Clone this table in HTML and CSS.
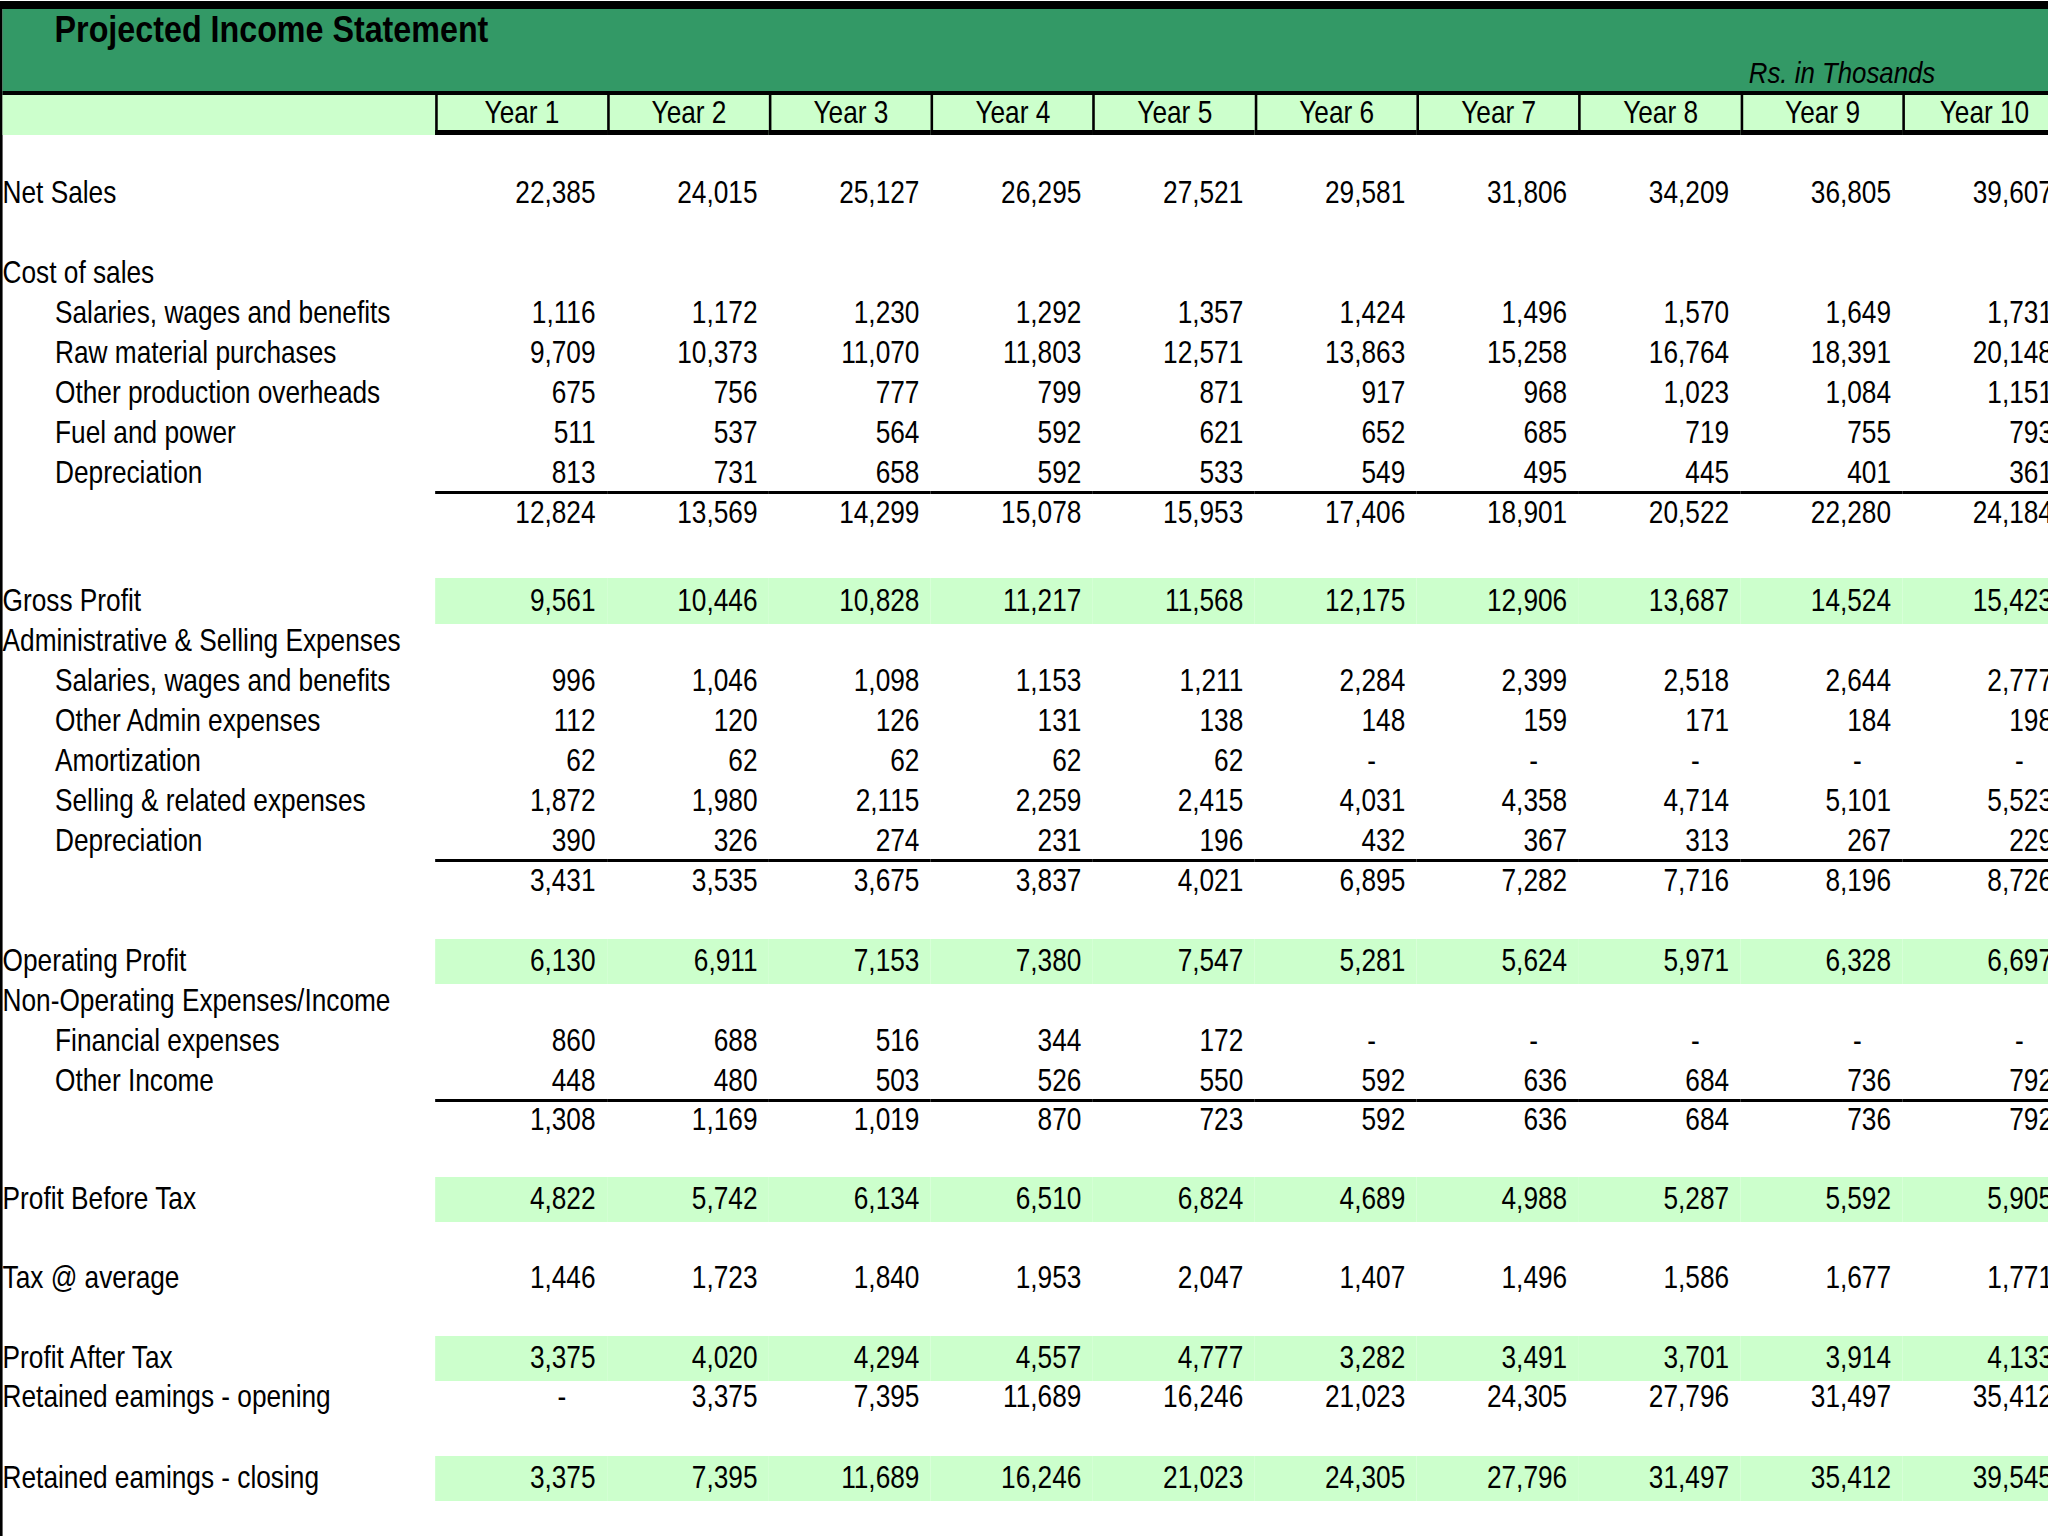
FILE: index.html
```html
<!DOCTYPE html>
<html>
<head>
<meta charset="utf-8">
<title>Projected Income Statement</title>
<link rel="stylesheet" href="styles.css">
</head>
<body>
<div class="sheet">
  <div class="titlebar">
    <div class="title">Projected Income Statement</div>
    <div class="units">Rs. in Thosands</div>
  </div>

  <div class="row head">
    <div class="c lbl"></div>
    <div class="c yr">Year 1</div><div class="c yr">Year 2</div><div class="c yr">Year 3</div><div class="c yr">Year 4</div><div class="c yr">Year 5</div>
    <div class="c yr">Year 6</div><div class="c yr">Year 7</div><div class="c yr">Year 8</div><div class="c yr">Year 9</div><div class="c yr">Year 10</div>
  </div>

  <div class="row h41"></div>

  <div class="row">
    <div class="c lbl">Net Sales</div>
    <div class="c v">22,385</div><div class="c v">24,015</div><div class="c v">25,127</div><div class="c v">26,295</div><div class="c v">27,521</div>
    <div class="c v">29,581</div><div class="c v">31,806</div><div class="c v">34,209</div><div class="c v">36,805</div><div class="c v">39,607</div>
  </div>

  <div class="row"></div>

  <div class="row">
    <div class="c lbl">Cost of sales</div>
  </div>
  <div class="row">
    <div class="c lbl ind">Salaries, wages and benefits</div>
    <div class="c v">1,116</div><div class="c v">1,172</div><div class="c v">1,230</div><div class="c v">1,292</div><div class="c v">1,357</div>
    <div class="c v">1,424</div><div class="c v">1,496</div><div class="c v">1,570</div><div class="c v">1,649</div><div class="c v">1,731</div>
  </div>
  <div class="row">
    <div class="c lbl ind">Raw material purchases</div>
    <div class="c v">9,709</div><div class="c v">10,373</div><div class="c v">11,070</div><div class="c v">11,803</div><div class="c v">12,571</div>
    <div class="c v">13,863</div><div class="c v">15,258</div><div class="c v">16,764</div><div class="c v">18,391</div><div class="c v">20,148</div>
  </div>
  <div class="row">
    <div class="c lbl ind">Other production overheads</div>
    <div class="c v">675</div><div class="c v">756</div><div class="c v">777</div><div class="c v">799</div><div class="c v">871</div>
    <div class="c v">917</div><div class="c v">968</div><div class="c v">1,023</div><div class="c v">1,084</div><div class="c v">1,151</div>
  </div>
  <div class="row">
    <div class="c lbl ind">Fuel and power</div>
    <div class="c v">511</div><div class="c v">537</div><div class="c v">564</div><div class="c v">592</div><div class="c v">621</div>
    <div class="c v">652</div><div class="c v">685</div><div class="c v">719</div><div class="c v">755</div><div class="c v">793</div>
  </div>
  <div class="row pre h35">
    <div class="c lbl ind">Depreciation</div>
    <div class="c v">813</div><div class="c v">731</div><div class="c v">658</div><div class="c v">592</div><div class="c v">533</div>
    <div class="c v">549</div><div class="c v">495</div><div class="c v">445</div><div class="c v">401</div><div class="c v">361</div>
  </div>
  <div class="row tot h45">
    <div class="c lbl"></div>
    <div class="c v">12,824</div><div class="c v">13,569</div><div class="c v">14,299</div><div class="c v">15,078</div><div class="c v">15,953</div>
    <div class="c v">17,406</div><div class="c v">18,901</div><div class="c v">20,522</div><div class="c v">22,280</div><div class="c v">24,184</div>
  </div>

  <div class="row h42"></div>

  <div class="row hl h46">
    <div class="c lbl">Gross Profit</div>
    <div class="c v">9,561</div><div class="c v">10,446</div><div class="c v">10,828</div><div class="c v">11,217</div><div class="c v">11,568</div>
    <div class="c v">12,175</div><div class="c v">12,906</div><div class="c v">13,687</div><div class="c v">14,524</div><div class="c v">15,423</div>
  </div>
  <div class="row">
    <div class="c lbl">Administrative &amp; Selling Expenses</div>
  </div>
  <div class="row">
    <div class="c lbl ind">Salaries, wages and benefits</div>
    <div class="c v">996</div><div class="c v">1,046</div><div class="c v">1,098</div><div class="c v">1,153</div><div class="c v">1,211</div>
    <div class="c v">2,284</div><div class="c v">2,399</div><div class="c v">2,518</div><div class="c v">2,644</div><div class="c v">2,777</div>
  </div>
  <div class="row">
    <div class="c lbl ind">Other Admin expenses</div>
    <div class="c v">112</div><div class="c v">120</div><div class="c v">126</div><div class="c v">131</div><div class="c v">138</div>
    <div class="c v">148</div><div class="c v">159</div><div class="c v">171</div><div class="c v">184</div><div class="c v">198</div>
  </div>
  <div class="row">
    <div class="c lbl ind">Amortization</div>
    <div class="c v">62</div><div class="c v">62</div><div class="c v">62</div><div class="c v">62</div><div class="c v">62</div>
    <div class="c v d">-</div><div class="c v d">-</div><div class="c v d">-</div><div class="c v d">-</div><div class="c v d">-</div>
  </div>
  <div class="row">
    <div class="c lbl ind">Selling &amp; related expenses</div>
    <div class="c v">1,872</div><div class="c v">1,980</div><div class="c v">2,115</div><div class="c v">2,259</div><div class="c v">2,415</div>
    <div class="c v">4,031</div><div class="c v">4,358</div><div class="c v">4,714</div><div class="c v">5,101</div><div class="c v">5,523</div>
  </div>
  <div class="row pre h35">
    <div class="c lbl ind">Depreciation</div>
    <div class="c v">390</div><div class="c v">326</div><div class="c v">274</div><div class="c v">231</div><div class="c v">196</div>
    <div class="c v">432</div><div class="c v">367</div><div class="c v">313</div><div class="c v">267</div><div class="c v">229</div>
  </div>
  <div class="row tot h45">
    <div class="c lbl"></div>
    <div class="c v">3,431</div><div class="c v">3,535</div><div class="c v">3,675</div><div class="c v">3,837</div><div class="c v">4,021</div>
    <div class="c v">6,895</div><div class="c v">7,282</div><div class="c v">7,716</div><div class="c v">8,196</div><div class="c v">8,726</div>
  </div>

  <div class="row h35"></div>

  <div class="row hl h45">
    <div class="c lbl">Operating Profit</div>
    <div class="c v">6,130</div><div class="c v">6,911</div><div class="c v">7,153</div><div class="c v">7,380</div><div class="c v">7,547</div>
    <div class="c v">5,281</div><div class="c v">5,624</div><div class="c v">5,971</div><div class="c v">6,328</div><div class="c v">6,697</div>
  </div>
  <div class="row">
    <div class="c lbl">Non-Operating Expenses/Income</div>
  </div>
  <div class="row">
    <div class="c lbl ind">Financial expenses</div>
    <div class="c v">860</div><div class="c v">688</div><div class="c v">516</div><div class="c v">344</div><div class="c v">172</div>
    <div class="c v d">-</div><div class="c v d">-</div><div class="c v d">-</div><div class="c v d">-</div><div class="c v d">-</div>
  </div>
  <div class="row pre h35">
    <div class="c lbl ind">Other Income</div>
    <div class="c v">448</div><div class="c v">480</div><div class="c v">503</div><div class="c v">526</div><div class="c v">550</div>
    <div class="c v">592</div><div class="c v">636</div><div class="c v">684</div><div class="c v">736</div><div class="c v">792</div>
  </div>
  <div class="row tot h44">
    <div class="c lbl"></div>
    <div class="c v">1,308</div><div class="c v">1,169</div><div class="c v">1,019</div><div class="c v">870</div><div class="c v">723</div>
    <div class="c v">592</div><div class="c v">636</div><div class="c v">684</div><div class="c v">736</div><div class="c v">792</div>
  </div>

  <div class="row h34"></div>

  <div class="row hl h45">
    <div class="c lbl">Profit Before Tax</div>
    <div class="c v">4,822</div><div class="c v">5,742</div><div class="c v">6,134</div><div class="c v">6,510</div><div class="c v">6,824</div>
    <div class="c v">4,689</div><div class="c v">4,988</div><div class="c v">5,287</div><div class="c v">5,592</div><div class="c v">5,905</div>
  </div>

  <div class="row h39"></div>

  <div class="row">
    <div class="c lbl">Tax @ average</div>
    <div class="c v">1,446</div><div class="c v">1,723</div><div class="c v">1,840</div><div class="c v">1,953</div><div class="c v">2,047</div>
    <div class="c v">1,407</div><div class="c v">1,496</div><div class="c v">1,586</div><div class="c v">1,677</div><div class="c v">1,771</div>
  </div>

  <div class="row h35"></div>

  <div class="row hl h45">
    <div class="c lbl">Profit After Tax</div>
    <div class="c v">3,375</div><div class="c v">4,020</div><div class="c v">4,294</div><div class="c v">4,557</div><div class="c v">4,777</div>
    <div class="c v">3,282</div><div class="c v">3,491</div><div class="c v">3,701</div><div class="c v">3,914</div><div class="c v">4,133</div>
  </div>
  <div class="row h39">
    <div class="c lbl">Retained eamings - opening</div>
    <div class="c v d">-</div><div class="c v">3,375</div><div class="c v">7,395</div><div class="c v">11,689</div><div class="c v">16,246</div>
    <div class="c v">21,023</div><div class="c v">24,305</div><div class="c v">27,796</div><div class="c v">31,497</div><div class="c v">35,412</div>
  </div>

  <div class="row h36"></div>

  <div class="row hl h45">
    <div class="c lbl">Retained eamings - closing</div>
    <div class="c v">3,375</div><div class="c v">7,395</div><div class="c v">11,689</div><div class="c v">16,246</div><div class="c v">21,023</div>
    <div class="c v">24,305</div><div class="c v">27,796</div><div class="c v">31,497</div><div class="c v">35,412</div><div class="c v">39,545</div>
  </div>

  <div class="row h36"></div>
</div>
</body>
</html>
```

FILE: styles.css
```css
* {
  box-sizing: border-box;
}

html,
body {
  margin: 0;
  padding: 0;
  background: #ffffff;
  overflow: hidden;
}

.sheet {
  width: 2404px;
  margin-top: 1px;
  border-top: 8px solid #000000;
  border-left: 3.5px solid #000000;
  transform: scaleX(0.86);
  transform-origin: 0 0;
  font-family: "Liberation Sans", Arial, sans-serif;
  font-size: 30.5px;
  color: #000000;
}

.titlebar {
  height: 86px;
  background: #339966;
  border-bottom: 4px solid #000000;
}

.title {
  font-weight: 700;
  font-size: 37.5px;
  line-height: 37px;
  padding: 2px 0 0 60.5px;
  white-space: nowrap;
}

.units {
  font-style: italic;
  font-size: 30px;
  line-height: 30px;
  margin-top: 9.5px;
  padding-left: 2030.5px;
  white-space: nowrap;
}

.row {
  display: grid;
  grid-template-columns: 502.5px 200px repeat(9, 188.3px);
  height: 40px;
}

.c {
  display: flex;
  align-items: flex-end;
  line-height: 30px;
  padding-bottom: 9px;
  white-space: nowrap;
}

.lbl {
  padding-left: 0;
}

.ind {
  padding-left: 61px;
}

.v {
  justify-content: flex-end;
  padding-right: 13px;
}

.v.d {
  padding-right: 47px;
}

.head .c {
  background: #ccffcc;
}

.head .yr {
  justify-content: center;
  border-left: 3.5px solid #000000;
  border-bottom: 5px solid #000000;
  padding-bottom: 3px;
}

.hl .v {
  background: #ccffcc;
}

.tot .v {
  border-top: 3px solid #000000;
}

.pre .c {
  padding-bottom: 4px;
}

.h34 { height: 34px; }
.h35 { height: 35px; }
.h36 { height: 36px; }
.h39 { height: 39px; }
.h41 { height: 41px; }
.h42 { height: 42px; }
.h44 { height: 44px; }
.h45 { height: 45px; }
.h46 { height: 46px; }
```
